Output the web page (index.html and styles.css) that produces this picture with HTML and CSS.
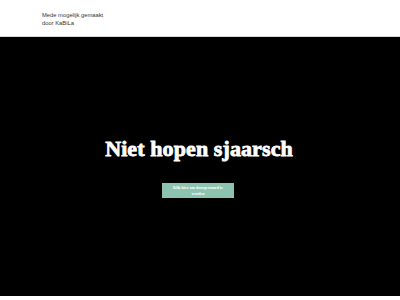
FILE: index.html
```html
<!DOCTYPE html>
<html lang="nl">
<head>
<meta charset="utf-8">
<title>Niet hopen sjaarsch</title>
<link rel="stylesheet" href="styles.css">
</head>
<body>
<header class="top">
  <p class="credit">Mede mogelijk gemaakt<br>door KaBiLa</p>
</header>
<main class="hero">
  <h1 class="title">Niet hopen sjaarsch</h1>
  <a class="btn" href="#">Klik hier om doorgestuurd te worden</a>
</main>
</body>
</html>
```
FILE: styles.css
```css
html, body { margin: 0; padding: 0; background: #fff; }
body { width: 400px; height: 300px; overflow: hidden; }
.top {
  height: 37px;
  border-bottom: 1px solid #d6d6d6;
  box-sizing: border-box;
  padding: 11px 0 0 42px;
}
.credit {
  margin: 0;
  font-family: "Liberation Sans", Arial, sans-serif;
  font-size: 5.8px;
  line-height: 8px;
  color: #333;
}
.hero {
  height: 259px;
  background: #000;
  display: flex;
  flex-direction: column;
  align-items: center;
  padding-top: 99px;
  box-sizing: border-box;
}
.title {
  margin: 0;
  font-family: "Liberation Serif", "DejaVu Serif", serif;
  font-weight: 700;
  font-size: 22px;
  line-height: 26px;
  color: #fff;
  letter-spacing: 0.1px;
  -webkit-text-stroke: 0.8px #fff;
  margin-left: -2px;
}
.btn {
  margin-top: 21px;
  margin-left: -4px;
  width: 72px;
  height: 15px;
  box-sizing: border-box;
  padding: 2px 6px;
  background: #8cc4b0;
  color: #fff;
  text-decoration: none;
  text-align: center;
  font-family: "Liberation Serif", serif;
  font-weight: 700;
  font-size: 4px;
  line-height: 5.5px;
}
```
